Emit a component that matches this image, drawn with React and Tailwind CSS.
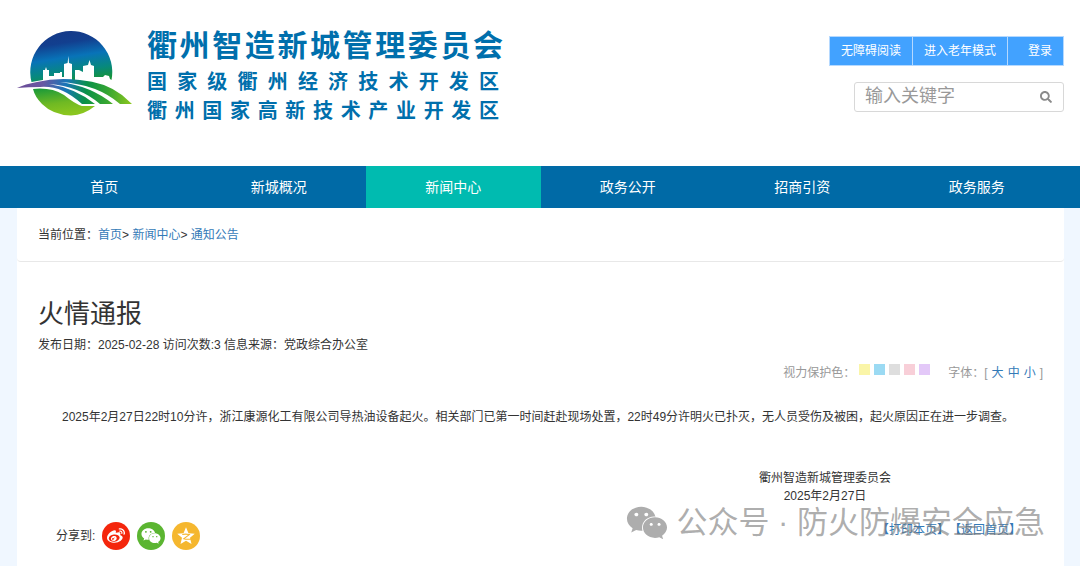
import { FaSearch, FaWeibo, FaWeixin } from "react-icons/fa";

const navItems = ["首页", "新城概况", "新闻中心", "政务公开", "招商引资", "政务服务"];

const swatches = [
  { name: "黄色", className: "bg-[#faf5a8]" },
  { name: "蓝色", className: "bg-[#9bdaf3]" },
  { name: "灰色", className: "bg-[#dedede]" },
  { name: "粉色", className: "bg-[#f8cfd8]" },
  { name: "紫色", className: "bg-[#e3c8f8]" },
];

function Emblem() {
  return (
    <svg viewBox="0 0 116 86" className="h-[86px] w-[116px] shrink-0" aria-hidden="true">
      <defs>
        <linearGradient id="sky" gradientUnits="userSpaceOnUse" x1="48" y1="0" x2="56" y2="52">
          <stop offset="0" stopColor="#153a88" />
          <stop offset="0.22" stopColor="#123f8f" />
          <stop offset="0.5" stopColor="#0873b8" />
          <stop offset="0.78" stopColor="#07897d" />
          <stop offset="1" stopColor="#15943a" />
        </linearGradient>
        <linearGradient id="ground" x1="0" y1="0" x2="0.3" y2="1">
          <stop offset="0" stopColor="#16983a" />
          <stop offset="0.6" stopColor="#6fb923" />
          <stop offset="1" stopColor="#8ac61f" />
        </linearGradient>
        <linearGradient id="road" gradientUnits="userSpaceOnUse" x1="0" y1="50" x2="115" y2="70">
          <stop offset="0" stopColor="#6b4a96" />
          <stop offset="0.22" stopColor="#6957a2" />
          <stop offset="0.42" stopColor="#1875b8" />
          <stop offset="0.6" stopColor="#0a9148" />
          <stop offset="0.78" stopColor="#35a532" />
          <stop offset="1" stopColor="#8cc71e" />
        </linearGradient>
      </defs>
      <path
        fill="url(#sky)"
        d="M14.5 51A41 41 0 1 1 94.5 49L93 48L92 45L88 44L86 46H84L77 46V35L74 34L72.5 29L71 34L66 35V41L64 40L62 39H58V49H55V33L52 32L51.4 25L50.6 32L47 33V46H45V41H43V42H37V45H32V39H30L29 36L28 39H26V49Q20 50 14.5 51Z"
      />
      <path
        fill="url(#ground)"
        d="M16 58Q34 56 47 64Q58 73 65 75H78Q67 84 54 84.5Q36 84 25 73Q18 66 16 58Z"
      />
      <path
        fill="url(#road)"
        d="M0 57Q8 53 20 51Q40 46 63 49Q88 51 105 64L115 73H65Q55 64 46 60Q35 55 23 56Q12 56 0 57Z"
      />
      {/* lane gaps, widening towards the lower right */}
      <path fill="#fff" d="M32 53Q62 55 83 73H78Q58 57 32 53Z" />
      <path fill="#fff" d="M43 51Q80 53 103 73H96Q74 55 43 51Z" />
    </svg>
  );
}

function QzoneIcon() {
  return (
    <svg viewBox="0 0 24 24" className="size-5" aria-hidden="true">
      <path
        fill="#fff"
        d="M12 1.5L15 8.6L22.5 9.2L16.8 14.2L18.6 21.5L12 17.6L5.4 21.5L7.2 14.2L1.5 9.2L9 8.6Z"
      />
      <path fill="none" stroke="#f5b72f" strokeWidth="1.3" d="M7.5 10.1Q12 9.3 16 10.3L9.3 15.3Q14 16.6 20 15.2" />
    </svg>
  );
}

function Header() {
  return (
    <header className="flex items-start justify-between bg-white px-4 pb-10">
      <a href="#home" className="mt-7 ml-px flex min-h-[98px] items-start gap-[14px] font-bold text-[#006fac]">
        <div className="pt-[3px]">
          <Emblem />
        </div>
        <div className="w-[356px]">
          <h1 className="text-[30px] leading-[36px] [text-align-last:justify]">衢州智造新城管理委员会</h1>
          <div className="w-[352px] text-[20px] leading-[29px]">
            <p className="pt-1 [text-align-last:justify]">国家级衢州经济技术开发区</p>
            <p className="[text-align-last:justify]">衢州国家高新技术产业开发区</p>
          </div>
        </div>
      </a>

      <div className="mt-9 flex flex-col items-end gap-4">
        <div className="flex gap-px border border-[#b5d9ff] bg-[#b5d9ff] text-[12px] leading-[28px] text-white">
          <button type="button" className="bg-[#42a2ff] px-[11px]">无障碍阅读</button>
          <button type="button" className="bg-[#42a2ff] px-[11px]">进入老年模式</button>
          <a href="#login" className="bg-[#42a2ff] pr-[11px] pl-5">登录</a>
        </div>
        <form className="flex h-[30px] w-[210px] items-center rounded-[3px] border border-[#d8d8d8]">
          <input
            type="text"
            aria-label="搜索"
            placeholder="输入关键字"
            className="h-full min-w-0 flex-1 pb-[2px] pl-[10px] text-[18px] outline-none placeholder:text-[#999]"
          />
          <button type="button" aria-label="搜索" className="flex h-full w-[34px] items-center justify-center text-[#8a8a8a]">
            <FaSearch className="size-3" />
          </button>
        </form>
      </div>
    </header>
  );
}

function Nav() {
  return (
    <nav className="bg-[#006aa6] pr-4 pl-[17px]">
      <ul className="grid grid-cols-6">
        {navItems.map((item) => (
          <li key={item}>
            <a
              href="#nav"
              className={`block text-center text-[14px] leading-[42px] text-white ${item === "新闻中心" ? "bg-[#00bbb0]" : ""}`}
            >
              {item}
            </a>
          </li>
        ))}
      </ul>
    </nav>
  );
}

function Article() {
  return (
    <article className="px-[21px] pt-[34px]">
      <h2 className="text-[26px] leading-9">火情通报</h2>
      <p className="mt-1 leading-[18px]">发布日期：2025-02-28 访问次数:3 信息来源：党政综合办公室</p>

      <div className="mt-[9px] flex items-center justify-end leading-5 text-[#999]">
        <span>视力保护色：</span>
        <div className="mb-2 ml-1 flex gap-1">
          {swatches.map((s) => (
            <button key={s.name} type="button" aria-label={s.name} className={`size-[11px] ${s.className}`} />
          ))}
        </div>
        <span className="ml-[18px]">字体：</span>
        <div className="flex gap-1 text-[#337ab7]">
          <span className="text-[#999]">[</span>
          <button type="button">大</button>
          <button type="button">中</button>
          <button type="button">小</button>
          <span className="text-[#999]">]</span>
        </div>
      </div>

      <p className="mt-6 indent-6 leading-5">
        2025年2月27日22时10分许，浙江康源化工有限公司导热油设备起火。相关部门已第一时间赶赴现场处置，22时49分许明火已扑灭，无人员受伤及被困，起火原因正在进一步调查。
      </p>

      <div className="mt-[42px] mr-[152px] flex justify-end text-center leading-[18px]">
        <div>
          <p>衢州智造新城管理委员会</p>
          <p>2025年2月27日</p>
        </div>
      </div>
    </article>
  );
}

function Footer() {
  return (
    <div className="relative mt-4 flex items-center justify-between pr-[43px] pb-4 pl-[39px]">
      <div className="flex items-center gap-[7px]">
        <span>分享到:</span>
        <a href="#weibo" aria-label="微博" className="flex size-7 items-center justify-center rounded-full bg-[#f4260c] text-white">
          <FaWeibo className="size-[18px]" />
        </a>
        <a href="#wechat" aria-label="微信" className="flex size-7 items-center justify-center rounded-full bg-[#5bb531] text-white">
          <FaWeixin className="size-5" />
        </a>
        <a href="#qzone" aria-label="QQ空间" className="flex size-7 items-center justify-center rounded-full bg-[#f5b72f]">
          <QzoneIcon />
        </a>
      </div>
      <div className="mb-3 flex text-[#337ab7]">
        <a href="#print">【打印本页】</a>
        <a href="#home">【返回首页】</a>
      </div>

      {/* Account watermark lies over the links */}
      <div className="pointer-events-none absolute -top-5 right-[19px] flex items-center gap-2 text-[31px] leading-[44px] whitespace-nowrap text-[#777]/60">
        <FaWeixin className="size-[42px]" />
        <span>公众号 · 防火防爆安全应急</span>
      </div>
    </div>
  );
}

export default function App() {
  return (
    <div className="flex min-h-screen flex-col bg-[#f0f7ff] font-['Liberation_Sans','Noto_Sans_CJK_SC',sans-serif] text-[12px] text-[#333]">
      <Header />
      <Nav />
      <main className="mr-4 ml-[17px] flex-1 bg-white">
        <div className="rounded-b border-b border-[#e8e8e8] px-[21px] pt-[18px] pb-[17px] leading-[18px]">
          当前位置：
          <a href="#home" className="text-[#337ab7]">首页</a>&gt;{" "}
          <a href="#news" className="text-[#337ab7]">新闻中心</a>&gt;{" "}
          <a href="#notice" className="text-[#337ab7]">通知公告</a>
        </div>
        <Article />
        <Footer />
      </main>
    </div>
  );
}
